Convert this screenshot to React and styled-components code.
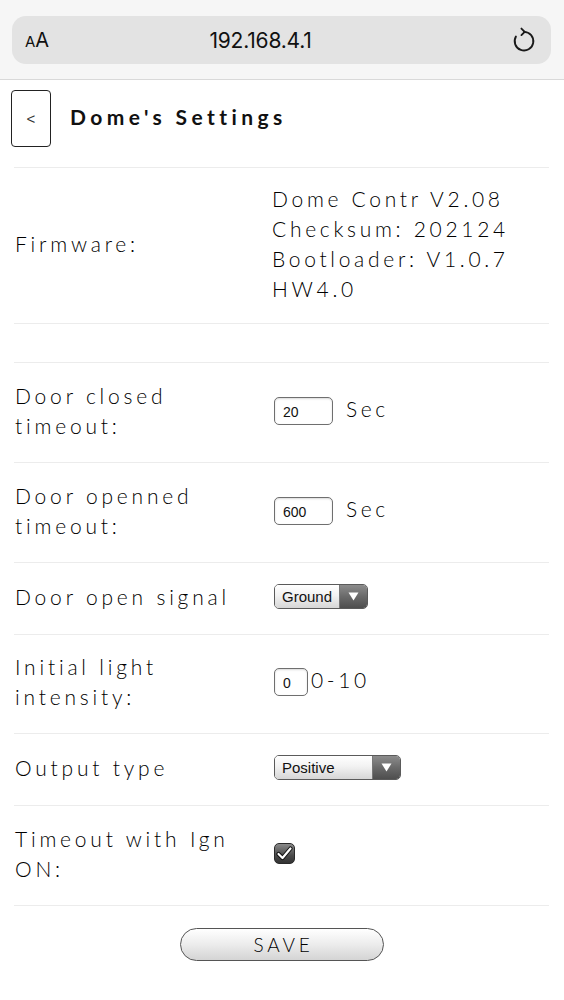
import React from "react";
import styled, { createGlobalStyle } from "styled-components";

const GlobalStyle = createGlobalStyle`
  html, body { margin: 0; padding: 0; background: #ffffff; }
  body { font-family: "Lato", "Noto Sans", "Liberation Sans", sans-serif; color: #000; }
  * { box-sizing: border-box; }
`;

const BrowserBar = styled.div`
  height: 80px;
  background: #f6f6f6;
  border-bottom: 1px solid #d9d9d9;
  padding: 16px 13px 0 12px;
`;

const UrlPill = styled.div`
  height: 48px;
  border-radius: 14px;
  background: #e3e3e3;
  display: flex;
  align-items: center;
  padding: 0 13px 0 13px;
  font-family: "Inter", "Noto Sans", sans-serif;
`;

const AaMark = styled.div`
  display: flex;
  align-items: baseline;
  width: 40px;
  color: #111;
  span:first-child { font-size: 15px; }
  span:last-child { font-size: 20px; }
`;

const Url = styled.div`
  flex: 1;
  text-align: center;
  font-size: 21px;
  color: #111;
  letter-spacing: -0.2px;
`;

const Reload = styled.div`
  width: 82px;
  display: flex;
  justify-content: flex-end;
`;

const Page = styled.div`
  padding: 0 15px 0 14px;
`;

const Header = styled.div`
  height: 88px;
  border-bottom: 1px solid #ececec;
  display: flex;
  align-items: flex-start;
  padding-top: 10px;
`;

const HeaderInner = styled.div`
  display: flex;
  align-items: center;
  gap: 19px;
`;

const BackButton = styled.button`
  margin-left: -3px;
  width: 40px;
  height: 57px;
  border: 1px solid #222;
  border-radius: 4px;
  background: #fff;
  font-family: "Liberation Sans", sans-serif;
  font-size: 15px;
  color: #333;
  padding: 0;
`;

const Title = styled.h1`
  margin: 0 0 4px 0;
  font-size: 21px;
  font-weight: 700;
  letter-spacing: 4.4px;
  color: #111;
`;

const Row = styled.div`
  display: grid;
  grid-template-columns: 258px 1fr;
  align-items: center;
  min-height: ${(p) => p.$h}px;
  padding-bottom: 4px;
  border-bottom: 1px solid #ececec;
`;

const Label = styled.div`
  padding-left: 1px;
  padding-right: 10px;
  font-size: 21px;
  font-weight: 300;
  line-height: 30px;
  letter-spacing: 3.8px;
`;

const Value = styled.div`
  display: flex;
  align-items: center;
  font-size: 21px;
  font-weight: 300;
  line-height: 30px;
  letter-spacing: 3.6px;
`;

const InfoText = styled.div`
  font-size: 21px;
  font-weight: 300;
  line-height: 30px;
  letter-spacing: 3.7px;
  white-space: nowrap;
`;

const NumInput = styled.input`
  width: ${(p) => p.$w}px;
  height: 28px;
  margin-left: 2px;
  border: 1px solid #6f6f6f;
  border-radius: 5px;
  background: #fff;
  box-shadow: inset 0 1px 2px rgba(0, 0, 0, 0.15);
  font-family: "Liberation Sans", sans-serif;
  font-size: 14px;
  letter-spacing: 0;
  padding: 2px 0 0 8px;
  color: #111;
  outline: none;
`;

const Unit = styled.span`
  margin-left: ${(p) => p.$gap}px;
  margin-top: ${(p) => p.$up}px;
`;

const SelectBox = styled.div`
  margin-left: 2px;
  width: ${(p) => p.$w}px;
  height: 25px;
  display: flex;
  border: 1px solid #5a5a5a;
  border-radius: 5px;
  overflow: hidden;
  letter-spacing: 0;
`;

const SelectText = styled.div`
  flex: 1;
  display: flex;
  align-items: center;
  padding-left: 7px;
  font-family: "Liberation Sans", sans-serif;
  font-size: 15px;
  color: #111;
  background: linear-gradient(#ffffff, #f2f2f2 45%, #d6d6d6);
  border-right: 1px solid #777;
`;

const SelectArrow = styled.div`
  width: 27px;
  display: flex;
  align-items: center;
  justify-content: center;
  background: linear-gradient(#8c8c8c, #6a6a6a 50%, #4e4e4e);
`;

const CheckBox = styled.div`
  margin-left: 2px;
  margin-top: -1px;
  width: 21px;
  height: 21px;
  border-radius: 5px;
  border: 1px solid #2a2a2a;
  background: linear-gradient(#8a8a8a, #4a4a4a 60%, #333);
  display: flex;
  align-items: center;
  justify-content: center;
`;

const SaveWrap = styled.div`
  display: flex;
  justify-content: center;
  padding-top: 22px;
`;

const SaveButton = styled.button`
  width: 204px;
  height: 33px;
  border: 1px solid #555;
  border-radius: 17px;
  background: linear-gradient(#ffffff, #ececec 50%, #d4d4d4);
  font-family: "Lato", "Noto Sans", sans-serif;
  font-size: 19px;
  font-weight: 300;
  letter-spacing: 3.8px;
  color: #000;
  padding: 0 0 0 4px;
`;

function ReloadIcon() {
  return (
    <svg width="28" height="28" viewBox="0 0 24 24" fill="none" stroke="#1a1a1a" strokeWidth="1.6" strokeLinecap="round" strokeLinejoin="round">
      <path d="M12 5 A8 8 0 1 1 5.07 9" />
      <path d="M9.8 2.2 L12.6 5 L9.8 7.8" />
    </svg>
  );
}

function Triangle() {
  return (
    <svg width="11" height="9" viewBox="0 0 11 9">
      <path d="M0.5 0.5 H10.5 L5.5 8.5 Z" fill="#ffffff" />
    </svg>
  );
}

function Check() {
  return (
    <svg width="17" height="15" viewBox="0 0 17 15">
      <path d="M2.5 8 L6.5 12 L14.5 2.5" fill="none" stroke="#111" strokeWidth="4.2" strokeLinecap="round" strokeLinejoin="round" />
      <path d="M2.5 8 L6.5 12 L14.5 2.5" fill="none" stroke="#fff" strokeWidth="2.2" strokeLinecap="round" strokeLinejoin="round" />
    </svg>
  );
}

function Select({ value, width }) {
  return (
    <SelectBox $w={width}>
      <SelectText>{value}</SelectText>
      <SelectArrow>
        <Triangle />
      </SelectArrow>
    </SelectBox>
  );
}

export default function App() {
  return (
    <>
      <GlobalStyle />
      <BrowserBar>
        <UrlPill>
          <AaMark>
            <span>A</span>
            <span>A</span>
          </AaMark>
          <Url>192.168.4.1</Url>
          <Reload>
            <ReloadIcon />
          </Reload>
        </UrlPill>
      </BrowserBar>
      <Page>
        <Header>
          <HeaderInner>
            <BackButton>&lt;</BackButton>
            <Title>Dome's Settings</Title>
          </HeaderInner>
        </Header>

        <Row $h={156}>
          <Label>Firmware:</Label>
          <InfoText>
            Dome Contr V2.08
            <br />
            Checksum: 202124
            <br />
            Bootloader: V1.0.7
            <br />
            HW4.0
          </InfoText>
        </Row>

        <Row $h={39}>
          <Label />
          <Value />
        </Row>

        <Row $h={100}>
          <Label>Door closed timeout:</Label>
          <Value>
            <NumInput $w={59} defaultValue="20" readOnly />
            <Unit $gap={13} $up={-4}>Sec</Unit>
          </Value>
        </Row>

        <Row $h={100}>
          <Label>Door openned timeout:</Label>
          <Value>
            <NumInput $w={59} defaultValue="600" readOnly />
            <Unit $gap={13} $up={-4}>Sec</Unit>
          </Value>
        </Row>

        <Row $h={72}>
          <Label>Door open signal</Label>
          <Value>
            <Select value="Ground" width={94} />
          </Value>
        </Row>

        <Row $h={99}>
          <Label>Initial light intensity:</Label>
          <Value>
            <NumInput $w={34} defaultValue="0" readOnly />
            <Unit $gap={3} $up={-4}>0-10</Unit>
          </Value>
        </Row>

        <Row $h={72}>
          <Label>Output type</Label>
          <Value>
            <Select value="Positive" width={127} />
          </Value>
        </Row>

        <Row $h={100}>
          <Label>Timeout with Ign ON:</Label>
          <Value>
            <CheckBox>
              <Check />
            </CheckBox>
          </Value>
        </Row>

        <SaveWrap>
          <SaveButton>SAVE</SaveButton>
        </SaveWrap>
      </Page>
    </>
  );
}
